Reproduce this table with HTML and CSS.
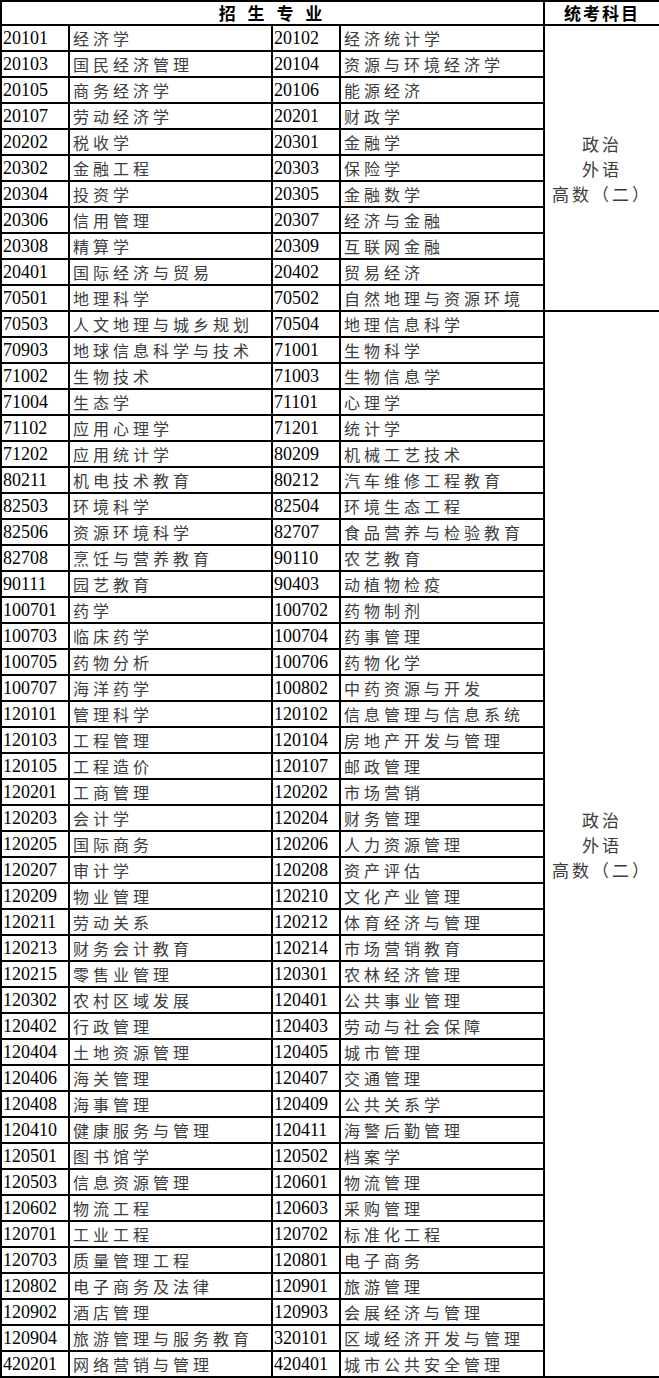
FILE: index.html
```html
<!DOCTYPE html>
<html lang="zh-CN">
<head>
<meta charset="utf-8">
<title>招生专业</title>
<link rel="stylesheet" href="styles.css">
</head>
<body>
<table class="majors">
<colgroup>
<col class="c-code"><col class="c-name"><col class="c-code2"><col class="c-name2"><col class="c-subj">
</colgroup>
<thead>
<tr class="head">
<th colspan="4" class="h-major">招 生 专 业</th>
<th class="h-subj">统考科目</th>
</tr>
</thead>
<tbody>
<tr><td class="code">20101</td><td class="name">经济学</td><td class="code">20102</td><td class="name">经济统计学</td><td class="subj" rowspan="11">政治<br>外语<br>高数（二）</td></tr>
<tr><td class="code">20103</td><td class="name">国民经济管理</td><td class="code">20104</td><td class="name">资源与环境经济学</td></tr>
<tr><td class="code">20105</td><td class="name">商务经济学</td><td class="code">20106</td><td class="name">能源经济</td></tr>
<tr><td class="code">20107</td><td class="name">劳动经济学</td><td class="code">20201</td><td class="name">财政学</td></tr>
<tr><td class="code">20202</td><td class="name">税收学</td><td class="code">20301</td><td class="name">金融学</td></tr>
<tr><td class="code">20302</td><td class="name">金融工程</td><td class="code">20303</td><td class="name">保险学</td></tr>
<tr><td class="code">20304</td><td class="name">投资学</td><td class="code">20305</td><td class="name">金融数学</td></tr>
<tr><td class="code">20306</td><td class="name">信用管理</td><td class="code">20307</td><td class="name">经济与金融</td></tr>
<tr><td class="code">20308</td><td class="name">精算学</td><td class="code">20309</td><td class="name">互联网金融</td></tr>
<tr><td class="code">20401</td><td class="name">国际经济与贸易</td><td class="code">20402</td><td class="name">贸易经济</td></tr>
<tr><td class="code">70501</td><td class="name">地理科学</td><td class="code">70502</td><td class="name">自然地理与资源环境</td></tr>
<tr><td class="code">70503</td><td class="name">人文地理与城乡规划</td><td class="code">70504</td><td class="name">地理信息科学</td><td class="subj" rowspan="41">政治<br>外语<br>高数（二）</td></tr>
<tr><td class="code">70903</td><td class="name">地球信息科学与技术</td><td class="code">71001</td><td class="name">生物科学</td></tr>
<tr><td class="code">71002</td><td class="name">生物技术</td><td class="code">71003</td><td class="name">生物信息学</td></tr>
<tr><td class="code">71004</td><td class="name">生态学</td><td class="code">71101</td><td class="name">心理学</td></tr>
<tr><td class="code">71102</td><td class="name">应用心理学</td><td class="code">71201</td><td class="name">统计学</td></tr>
<tr><td class="code">71202</td><td class="name">应用统计学</td><td class="code">80209</td><td class="name">机械工艺技术</td></tr>
<tr><td class="code">80211</td><td class="name">机电技术教育</td><td class="code">80212</td><td class="name">汽车维修工程教育</td></tr>
<tr><td class="code">82503</td><td class="name">环境科学</td><td class="code">82504</td><td class="name">环境生态工程</td></tr>
<tr><td class="code">82506</td><td class="name">资源环境科学</td><td class="code">82707</td><td class="name">食品营养与检验教育</td></tr>
<tr><td class="code">82708</td><td class="name">烹饪与营养教育</td><td class="code">90110</td><td class="name">农艺教育</td></tr>
<tr><td class="code">90111</td><td class="name">园艺教育</td><td class="code">90403</td><td class="name">动植物检疫</td></tr>
<tr><td class="code">100701</td><td class="name">药学</td><td class="code">100702</td><td class="name">药物制剂</td></tr>
<tr><td class="code">100703</td><td class="name">临床药学</td><td class="code">100704</td><td class="name">药事管理</td></tr>
<tr><td class="code">100705</td><td class="name">药物分析</td><td class="code">100706</td><td class="name">药物化学</td></tr>
<tr><td class="code">100707</td><td class="name">海洋药学</td><td class="code">100802</td><td class="name">中药资源与开发</td></tr>
<tr><td class="code">120101</td><td class="name">管理科学</td><td class="code">120102</td><td class="name">信息管理与信息系统</td></tr>
<tr><td class="code">120103</td><td class="name">工程管理</td><td class="code">120104</td><td class="name">房地产开发与管理</td></tr>
<tr><td class="code">120105</td><td class="name">工程造价</td><td class="code">120107</td><td class="name">邮政管理</td></tr>
<tr><td class="code">120201</td><td class="name">工商管理</td><td class="code">120202</td><td class="name">市场营销</td></tr>
<tr><td class="code">120203</td><td class="name">会计学</td><td class="code">120204</td><td class="name">财务管理</td></tr>
<tr><td class="code">120205</td><td class="name">国际商务</td><td class="code">120206</td><td class="name">人力资源管理</td></tr>
<tr><td class="code">120207</td><td class="name">审计学</td><td class="code">120208</td><td class="name">资产评估</td></tr>
<tr><td class="code">120209</td><td class="name">物业管理</td><td class="code">120210</td><td class="name">文化产业管理</td></tr>
<tr><td class="code">120211</td><td class="name">劳动关系</td><td class="code">120212</td><td class="name">体育经济与管理</td></tr>
<tr><td class="code">120213</td><td class="name">财务会计教育</td><td class="code">120214</td><td class="name">市场营销教育</td></tr>
<tr><td class="code">120215</td><td class="name">零售业管理</td><td class="code">120301</td><td class="name">农林经济管理</td></tr>
<tr><td class="code">120302</td><td class="name">农村区域发展</td><td class="code">120401</td><td class="name">公共事业管理</td></tr>
<tr><td class="code">120402</td><td class="name">行政管理</td><td class="code">120403</td><td class="name">劳动与社会保障</td></tr>
<tr><td class="code">120404</td><td class="name">土地资源管理</td><td class="code">120405</td><td class="name">城市管理</td></tr>
<tr><td class="code">120406</td><td class="name">海关管理</td><td class="code">120407</td><td class="name">交通管理</td></tr>
<tr><td class="code">120408</td><td class="name">海事管理</td><td class="code">120409</td><td class="name">公共关系学</td></tr>
<tr><td class="code">120410</td><td class="name">健康服务与管理</td><td class="code">120411</td><td class="name">海警后勤管理</td></tr>
<tr><td class="code">120501</td><td class="name">图书馆学</td><td class="code">120502</td><td class="name">档案学</td></tr>
<tr><td class="code">120503</td><td class="name">信息资源管理</td><td class="code">120601</td><td class="name">物流管理</td></tr>
<tr><td class="code">120602</td><td class="name">物流工程</td><td class="code">120603</td><td class="name">采购管理</td></tr>
<tr><td class="code">120701</td><td class="name">工业工程</td><td class="code">120702</td><td class="name">标准化工程</td></tr>
<tr><td class="code">120703</td><td class="name">质量管理工程</td><td class="code">120801</td><td class="name">电子商务</td></tr>
<tr><td class="code">120802</td><td class="name">电子商务及法律</td><td class="code">120901</td><td class="name">旅游管理</td></tr>
<tr><td class="code">120902</td><td class="name">酒店管理</td><td class="code">120903</td><td class="name">会展经济与管理</td></tr>
<tr><td class="code">120904</td><td class="name">旅游管理与服务教育</td><td class="code">320101</td><td class="name">区域经济开发与管理</td></tr>
<tr><td class="code">420201</td><td class="name">网络营销与管理</td><td class="code">420401</td><td class="name">城市公共安全管理</td></tr>
</tbody>
</table>
</body>
</html>
```

FILE: styles.css
```css
html {
  overflow: hidden;
  background: #fff;
}
body {
  margin: 0;
  background: #fff;
}
.majors {
  border-collapse: separate;
  border-spacing: 0;
  table-layout: fixed;
  width: 661px;
  border-top: 2px solid #000;
  border-left: 2px solid #000;
}
.c-code { width: 68px; }
.c-name { width: 203px; }
.c-code2 { width: 68px; }
.c-name2 { width: 204px; }
.c-subj { width: 116px; }

.majors th,
.majors td {
  box-sizing: border-box;
  border-right: 2px solid #000;
  border-bottom: 2px solid #000;
  padding: 0;
  height: 26px;
  vertical-align: middle;
  white-space: nowrap;
}
.majors td {
  overflow: hidden;
}
.majors .head th {
  height: 24px;
  line-height: 22px;
  font-family: "Noto Sans CJK SC", sans-serif;
  font-weight: 700;
  font-size: 17px;
  color: #000;
  text-align: center;
  overflow: visible;
}
.h-major {
  letter-spacing: 4px;
}
.h-subj {
  letter-spacing: 2px;
}
.code {
  font-family: "Liberation Serif", "Times New Roman", serif;
  font-size: 18px;
  line-height: 24px;
  color: #000;
  padding-left: 1px !important;
  text-align: left;
}
.name {
  font-family: "Noto Sans CJK SC", sans-serif;
  font-size: 16px;
  line-height: 24px;
  letter-spacing: 4px;
  color: #3c3c3c;
  padding-left: 3px !important;
  text-align: left;
}
.subj {
  font-family: "Noto Sans CJK SC", sans-serif;
  font-size: 17px;
  line-height: 25px;
  letter-spacing: 3px;
  color: #3c3c3c;
  text-align: center;
  height: auto !important;
}
```
